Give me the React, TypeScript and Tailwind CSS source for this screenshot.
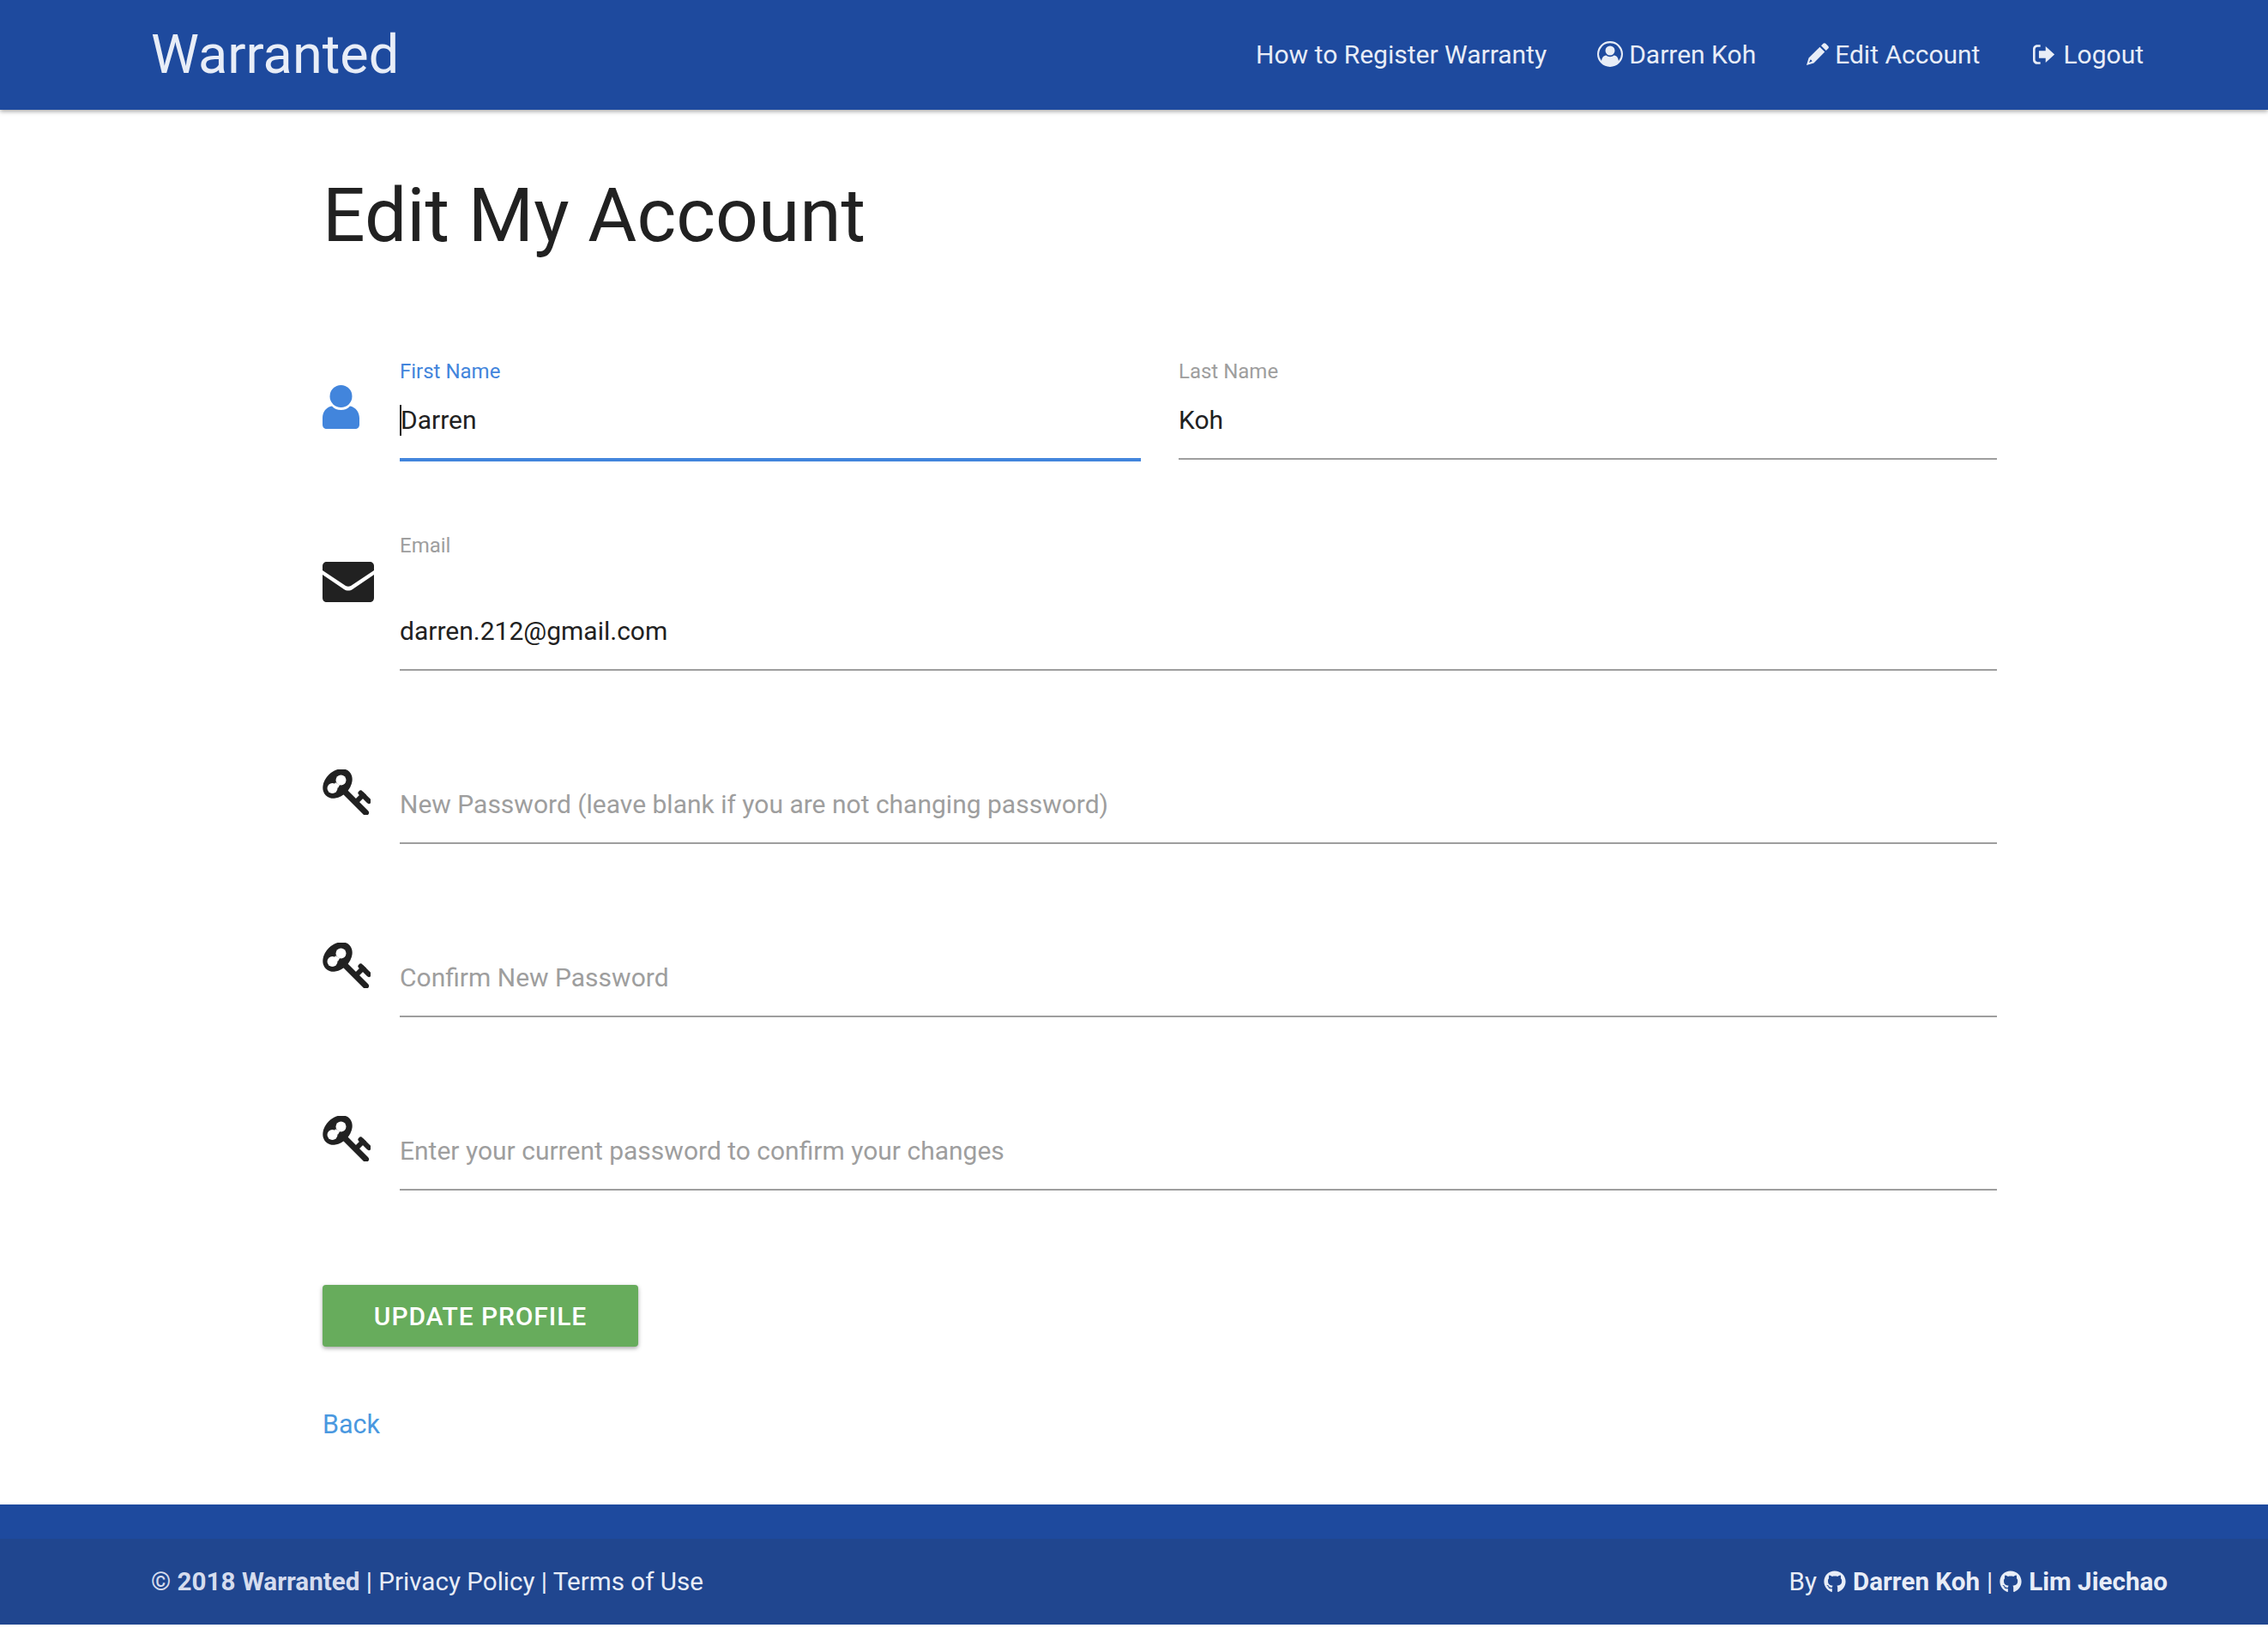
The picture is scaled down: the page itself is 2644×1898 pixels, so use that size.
import React from 'react';
import { FaGithub } from 'react-icons/fa';

function PersonIcon() {
  return (
    <svg viewBox="0 0 43 51" className="w-[43px] h-[51px] fill-[#4285dc]">
      <circle cx="21.500" cy="13" r="13" />
      <path d="M11 24.500c2.500 3 6.500 4.500 10.500 4.500s8-1.500 10.500-4.500c6.500 1 11 7 11 14V46c0 3-2 5-5 5H5c-3 0-5-2-5-5v-7.500c0-7.500 4.500-13 11-14z" />
    </svg>
  );
}

function MailIcon() {
  return (
    <svg viewBox="0 0 60 47" className="w-[60px] h-[47px] fill-[#212121]">
      <path d="M5 0h50c3 0 5 2 5 5v5L33 28c-2 1-4 1-6 0L0 10V5c0-3 2-5 5-5z" />
      <path d="M0 15l25 17c3 2 7 2 10 0l25-17v27c0 3-2 5-5 5H5c-3 0-5-2-5-5z" />
    </svg>
  );
}

function KeyIcon() {
  return (
    <svg viewBox="0 0 56 53" className="w-[56px] h-[53px]" fill="none">
      <ellipse cx="17.500" cy="16.500" rx="19.500" ry="14.500" transform="rotate(-45 17.500 16.500)" fill="#212121" />
      <circle cx="11.500" cy="22" r="6" fill="#fff" />
      <circle cx="21.500" cy="12.500" r="6" fill="#fff" />
      <path d="M14 17l5 3" stroke="#fff" strokeWidth="4" />
      <path d="M27 27l23.500 23.500" stroke="#212121" strokeWidth="7" strokeLinecap="round" />
      <path d="M39 38l10-10" stroke="#212121" strokeWidth="6" />
      <path d="M44.500 27.500l9.500 9.500" stroke="#212121" strokeWidth="6" strokeLinecap="round" />
    </svg>
  );
}

function UserCircleIcon() {
  return (
    <svg viewBox="0 0 30 30" className="w-[30px] h-[30px] fill-[#e8edf7]">
      <path
        fillRule="evenodd"
        d="M15 0a15 15 0 1 0 0 30 15 15 0 0 0 0-30zm0 2.200a12.800 12.800 0 0 1 10 20.800c-.6-3.400-2-6-5.500-6.400-1.200 1-2.700 1.600-4.500 1.600s-3.300-.6-4.500-1.600C7 17 5.600 19.600 5 23A12.800 12.800 0 0 1 15 2.200z"
      />
      <circle cx="15" cy="11" r="5.500" />
    </svg>
  );
}

function PencilIcon() {
  return (
    <svg viewBox="0 0 26 26" className="w-[26px] h-[26px] fill-[#e8edf7]">
      <path d="M19.500.8c.8-.8 2-.8 2.800 0l3 3c.8.800.8 2 0 2.800l-2.500 2.500L17 3.300z" />
      <path fillRule="evenodd" d="M15.500 4.800l5.800 5.800L8.500 23.400 0 26l2.600-8.500zM4.500 19.500l-1.500 3.500 3.500-1.500-.6-1.400z" />
    </svg>
  );
}

function SignOutIcon() {
  return (
    <svg viewBox="0 0 30 26" className="w-[26px] h-[23px] fill-[#e8edf7]">
      <path d="M10 0v3H6C4.500 3 3 4.500 3 6v14c0 1.500 1.500 3 3 3h4v3H5.500C2.500 26 0 23.500 0 20.500v-15C0 2.500 2.500 0 5.500 0z" />
      <path d="M17 2l12 11-12 11v-6H8V8h9z" />
    </svg>
  );
}

function Field({ label, value, placeholder, focused, gap, className }: {
  label?: string;
  value?: string;
  placeholder?: string;
  focused?: boolean;
  gap?: string;
  className?: string;
}) {
  return (
    <div className={`flex flex-col ${className ?? ''}`}>
      {label && (
        <label className={`text-[24px] leading-[28px] ${gap ?? 'mb-[18px]'} ${focused ? 'text-[#4285dc]' : 'text-[#9e9e9e]'}`}>
          {label}
        </label>
      )}
      <div
        className={`flex items-center h-[48px] pt-[2px] text-[30px] leading-[46px] ${
          value ? 'text-[#212121]' : 'text-[#9e9e9e]'
        }`}
      >
        {focused && <span className="w-[2px] h-[36px] bg-[#212121] -mr-[1px]" />}
        {value ?? placeholder}
      </div>
      <div className={focused ? 'mt-[21px] h-[4px] bg-[#4285dc]' : 'mt-[21px] mb-[2px] h-[2px] bg-[#9e9e9e]'} />
    </div>
  );
}

const passwordRows = [
  'New Password (leave blank if you are not changing password)',
  'Confirm New Password',
  'Enter your current password to confirm your changes',
];

export default function App() {
  return (
    <div className="min-h-[1898px] bg-white flex flex-col font-['Roboto',sans-serif]">
      {/* Header */}
      <header className="h-[128px] bg-[#1e4a9e] shadow-[0_2px_5px_rgba(0,0,0,0.35)] flex items-center justify-between pl-[176px] pr-[145px] text-[#e8edf7] relative">
        <a className="text-[63px] leading-none pb-[2px]">Warranted</a>
        <nav className="flex items-center gap-[59px] text-[30px] pb-[2px]">
          <a>How to Register Warranty</a>
          <a className="flex items-center gap-[7px]">
            <UserCircleIcon />
            Darren Koh
          </a>
          <a className="flex items-center gap-[7px]">
            <PencilIcon />
            Edit Account
          </a>
          <a className="flex items-center gap-[9px] ml-[3px]">
            <SignOutIcon />
            Logout
          </a>
        </nav>
      </header>

      {/* Form */}
      <main className="flex-1 pl-[376px] pr-[316px]">
        <h1 className="mt-[60px] text-[87.5px] leading-[126px] text-[#212121]">Edit My Account</h1>

        <div className="mt-[105px] flex gap-[47px]">
          <div className="w-[43px] mt-[30px] shrink-0">
            <PersonIcon />
          </div>
          <div className="flex-1 flex gap-[44px]">
            <Field className="w-[864px]" label="First Name" value="Darren" focused />
            <Field className="flex-1" label="Last Name" value="Koh" />
          </div>
        </div>

        <div className="mt-[84px] flex gap-[30px]">
          <div className="w-[60px] mt-[33px] shrink-0">
            <MailIcon />
          </div>
          <Field className="flex-1" label="Email" value="darren.212@gmail.com" gap="mb-[61px]" />
        </div>

        {passwordRows.map((text) => (
          <div key={text} className="mt-[113px] flex gap-[34px]">
            <div className="w-[56px] shrink-0">
              <KeyIcon />
            </div>
            <Field className="flex-1 pt-[16px]" placeholder={text} />
          </div>
        ))}

        <button className="mt-[108px] block w-[368px] h-[72px] rounded-[4px] bg-[#67ac5c] text-white text-[30px] font-medium uppercase tracking-[0.9px] shadow-[0_2px_5px_rgba(0,0,0,0.35)]">
          Update Profile
        </button>

        <a className="mt-[67px] block text-[30.5px] leading-[48px] text-[#4a98e0]">Back</a>
      </main>

      {/* Footer */}
      <footer className="h-[140px] mb-[4px] flex flex-col text-[29.6px] text-[#e8edf7]">
        <div className="h-[40px] bg-[#1e4a9e]" />
        <div className="flex-1 bg-[#20468f] flex items-center justify-between pl-[176px] pr-[117px]">
          <div>
            <b className="text-[#d5dcee]">© 2018 Warranted</b> | Privacy Policy | Terms of Use
          </div>
          <div className="flex items-center gap-[8px]">
            By <FaGithub className="w-[26px] h-[26px]" /> <b>Darren Koh</b> | <FaGithub className="w-[26px] h-[26px]" /> <b>Lim Jiechao</b>
          </div>
        </div>
      </footer>
    </div>
  );
}
